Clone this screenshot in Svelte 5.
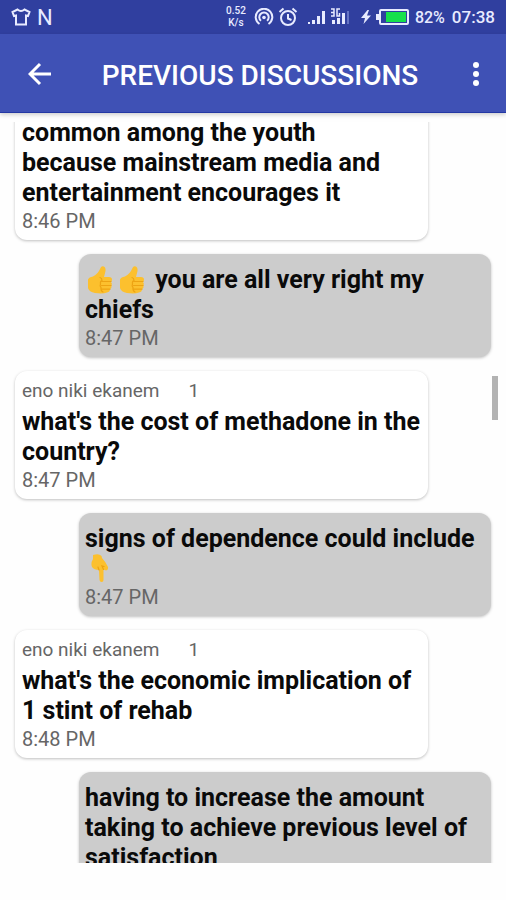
<script lang="ts">
    type Message = {
        mine?: boolean;
        author?: string;
        count?: number;
        emoji?: "up" | "down";
        repeat?: number;
        text: string;
        time?: string;
    };

    const messages: Message[] = [
        { text: "common among the youth\nbecause mainstream media and\nentertainment encourages it", time: "8:46 PM" },
        { mine: true, emoji: "up", repeat: 2, text: "you are all very right my chiefs", time: "8:47 PM" },
        { author: "eno niki ekanem", count: 1, text: "what's the cost of methadone in the country?", time: "8:47 PM" },
        { mine: true, emoji: "down", repeat: 1, text: "signs of dependence could include", time: "8:47 PM" },
        { author: "eno niki ekanem", count: 1, text: "what's the economic implication of 1 stint of rehab", time: "8:48 PM" },
        { mine: true, text: "having to increase the amount taking to achieve previous level of satisfaction" },
    ];
</script>

{#snippet thumb()}
    <svg class="emoji" viewBox="0 0 32 30" role="img" aria-label="thumbs up">
        <path fill="#fcc02e" d="M3 14.5Q4 12 8 11.5Q13 9 15.500 3Q16 1 18 1.200Q21 2 20.500 6L19 12H24Q27 12 27 14.500Q27 16 26 17Q27.500 18 26.500 20.500Q27 23 25 24Q25 27 22 27.500Q18 29 10 28Q4 27 3 23Z" />
        <path fill="none" stroke="#eda313" stroke-width="1.200" stroke-linecap="round" d="M15 12.500Q17 13 17 15.500Q15 16 15.500 19Q14.500 21 16 22.500Q15.500 25.500 18 27M17 16.500H26M16.500 20.500H26M17 24.200H25" />
    </svg>
{/snippet}

{#snippet pointDown()}
    <svg class="emoji" viewBox="0 0 32 30" role="img" aria-label="pointing down">
        <path fill="#fcc02e" d="M8 1Q14 -1 16.500 2L17 4Q20 7 23 13Q23.500 16 21 16.500L18.500 15.500V26Q18.500 28 16.700 28Q14.800 28 14.500 26L14 16Q9 16 7 13Q5.500 9 8 5Z" />
        <path fill="none" stroke="#eda313" stroke-width="1.200" stroke-linecap="round" d="M18.500 15.500L17 12L19 12.500M14 16L13 13" />
    </svg>
{/snippet}

<div class="screen">
    <div class="status">
        <svg class="shirt" width="20" height="18" viewBox="0 0 20 18">
            <path d="M6.500 1.500Q10 4.500 13.500 1.500L18.500 4L17 8L15 7.500V16.500H5V7.500L3 8L1.500 4Z" />
        </svg>
        <span class="n">N</span>
        <span class="speed"><span>0.52</span><span>K/s</span></span>
        <svg class="hotspot" width="20" height="18" viewBox="0 0 20 18">
            <path d="M5.500 16A8.300 8.300 0 1 1 14.500 16M7 12.800A4.700 4.700 0 1 1 13 12.800" />
            <circle class="solid" cx="10" cy="9.500" r="1.800" />
        </svg>
        <svg class="alarm" width="20" height="20" viewBox="0 0 20 20">
            <circle cx="10" cy="11" r="7" />
            <path d="M10 7V11.500L13.500 13M1.500 5L5.500 1.500M18.500 5L14.500 1.500" />
        </svg>
        <svg class="bars" width="44" height="20" viewBox="0 0 44 20">
            <path class="solid" d="M1 15h2v2H1zM5 13h3v4H5zM10 9h3v8h-3zM15 4h3v13h-3zM25 13h3v4h-3zM30 11h3v6h-3zM35 6h3v11h-3z" />
            <path class="dim" d="M40 4h2v13h-2z" />
            <path class="small" d="M24 2H27V9H24M24 5.500H27M33 2H30V9H32.500V6" />
        </svg>
        <svg class="bolt" width="10" height="14" viewBox="0 0 10 14">
            <path class="solid" d="M6.500 0L0 8H4L2.500 14L10 5.500H6L8 0Z" />
        </svg>
        <svg class="battery" width="33" height="16" viewBox="0 0 33 16">
            <rect x="4" y="1" width="28" height="14" rx="1" />
            <path class="solid" d="M0 5h3v6H0z" />
            <path class="charge" d="M10 3h20v10H10z" />
        </svg>
        <span class="percent">82%</span>
        <span class="clock">07:38</span>
    </div>

    <header>
        <button class="back" aria-label="Back">
            <svg width="24" height="24" viewBox="0 0 24 24">
                <path d="M23 12H2M12 2L2 12L12 22" />
            </svg>
        </button>
        <h1>PREVIOUS DISCUSSIONS</h1>
        <button class="more" aria-label="More options">
            <svg width="8" height="24" viewBox="0 0 8 24">
                <circle cx="4" cy="3" r="3" />
                <circle cx="4" cy="12" r="3" />
                <circle cx="4" cy="21" r="3" />
            </svg>
        </button>
    </header>

    <main>
        <div class="list">
            {#each messages as m}
                <article class:mine={m.mine}>
                    {#if m.author}
                        <div class="author"><span>{m.author}</span><span>{m.count}</span></div>
                    {/if}
                    <p>
                        {#if m.emoji === "up"}
                            {#each Array(m.repeat) as _}{@render thumb()}{/each}
                        {/if}
                        {m.text}
                        {#if m.emoji === "down"}
                            {@render pointDown()}
                        {/if}
                    </p>
                    {#if m.time}
                        <time>{m.time}</time>
                    {/if}
                </article>
            {/each}
        </div>
        <div class="scrollbar"></div>
    </main>
</div>

<style>
    :global(body) {
        margin: 0;
        background: #fefefe;
        font-family: Roboto, sans-serif;
    }

    .screen {
        display: flex;
        flex-direction: column;
        height: 100vh;
    }

    .status {
        display: flex;
        align-items: center;
        flex: none;
        height: 34px;
        padding: 0 11px;
        background: #303f9f;
        color: #e8ebff;
        font-size: 17px;
        font-weight: 500;
    }

    .status svg {
        flex: none;
        fill: none;
        stroke: #e8ebff;
        stroke-width: 2;
    }

    .status .solid {
        fill: #e8ebff;
        stroke: none;
    }

    .status .small {
        stroke-width: 1.5;
    }

    .status .dim {
        fill: #6674c4;
        stroke: none;
    }

    .status .charge {
        fill: #16e04c;
        stroke: none;
    }

    .n {
        margin-left: 6px;
        font-size: 22px;
        font-weight: 400;
    }

    .speed {
        display: flex;
        flex-direction: column;
        align-items: center;
        margin-left: auto;
        font-size: 10px;
        line-height: 12px;
    }

    .hotspot {
        margin-left: 8px;
    }

    .alarm {
        margin-left: 4px;
    }

    .bars {
        margin-left: 9px;
    }

    .bolt {
        margin-left: 10px;
    }

    .battery {
        margin-left: 5px;
    }

    .percent {
        margin-left: 6px;
        font-size: 16px;
    }

    .clock {
        margin-left: 7px;
    }

    header {
        display: flex;
        align-items: center;
        flex: none;
        box-sizing: border-box;
        height: 79px;
        padding: 2px 26px 0 28px;
        border-bottom: 1px solid #2438a4;
        background: #3f51b5;
        box-shadow: 0 2px 4px #0000002e;
        color: white;
    }

    header button {
        display: flex;
        padding: 0;
        border: none;
        background: none;
        color: inherit;
        cursor: pointer;
    }

    .back svg {
        fill: none;
        stroke: currentColor;
        stroke-width: 3;
    }

    .more svg {
        fill: currentColor;
    }

    h1 {
        flex: 1;
        margin: 0;
        padding: 2px 4px 0 0;
        text-align: center;
        font-size: 28px;
        font-weight: 500;
    }

    main {
        position: relative;
        display: flex;
        flex: 1;
        min-height: 0;
        padding: 9px 0 37px;
    }

    .list {
        display: flex;
        flex: 1;
        flex-direction: column;
        gap: 14px;
        overflow: hidden;
    }

    article {
        flex: none;
        margin: 0 78px 0 15px;
        padding: 7px 6px 5px 7px;
        border-radius: 12px;
        background: white;
        box-shadow: 0 1px 3px #00000040;
    }

    /* the list is scrolled part way into the first message */
    article:first-child {
        margin-top: -15px;
    }

    article.mine {
        margin: 0 15px 0 79px;
        padding-left: 6px;
        background: #cccccc;
    }

    .author {
        display: flex;
        gap: 29px;
        color: #666666;
        font-size: 19px;
        line-height: 25px;
    }

    p {
        margin: 4px 0 0;
        color: #0a0a0a;
        font-size: 25px;
        font-weight: 700;
        line-height: 30px;
        white-space: pre-line;
    }

    time {
        display: block;
        color: #666666;
        font-size: 20px;
        line-height: 27px;
    }

    .emoji {
        width: 32px;
        height: 30px;
        vertical-align: top;
    }

    .scrollbar {
        position: absolute;
        top: 263px;
        right: 8px;
        width: 6px;
        height: 44px;
        background: #b3b3b3;
    }
</style>
